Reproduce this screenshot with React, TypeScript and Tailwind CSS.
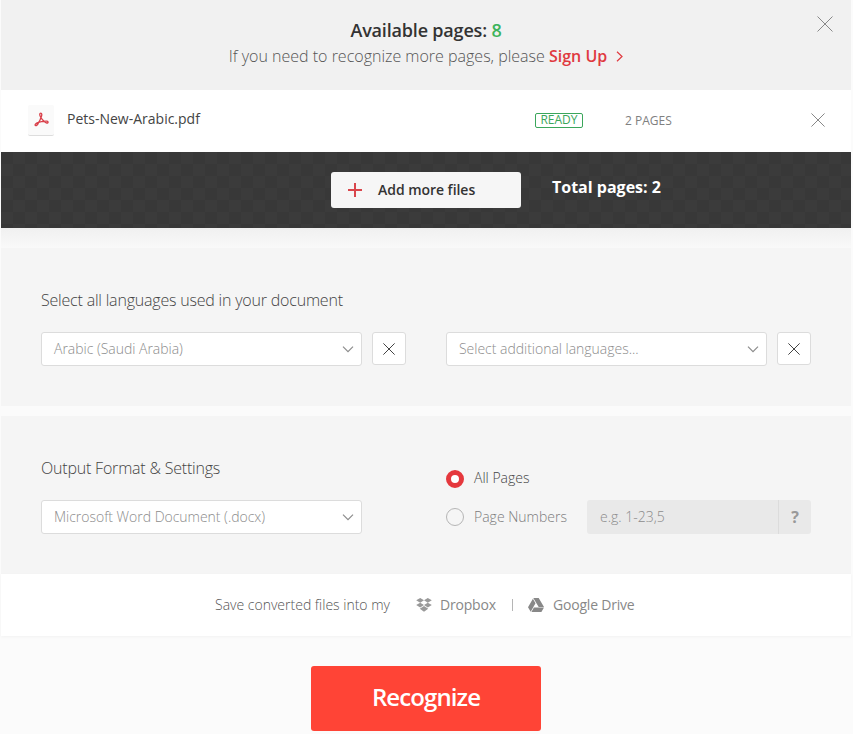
import { useState } from "react";

type IconProps = {
  className?: string;
};

type SelectProps = {
  label: string;
};

function CloseIcon({ className }: IconProps) {
  return (
    <svg viewBox="0 0 16 16" fill="none" stroke="currentColor" className={className}>
      <path d="M.5.5l15 15M15.5.5l-15 15" vectorEffect="non-scaling-stroke" />
    </svg>
  );
}

function PdfIcon({ className }: IconProps) {
  return (
    <svg viewBox="0 0 16 16" fill="none" stroke="currentColor" strokeWidth="1.4" className={className}>
      <path d="M7.400 5.800C5.500 3.200 6 1.200 7.200 1.200s1.700 2 .2 4.600zM7.400 5.800c-.4 1.900-1.200 3.700-2.500 5.400M7.400 5.800c.9 1.700 1.900 3 3.400 4.200M4.900 11.200c1.800-.7 3.800-1.100 5.900-1.200M4.900 11.200c-2.600.5-4 1.900-3.700 2.900.5 1.200 2.600.1 3.700-2.900zM10.800 10c2.400-.7 4.200-.2 4.200.9 0 1.300-2.300 1.200-4.200-.9z" />
    </svg>
  );
}

function DropboxIcon({ className }: IconProps) {
  return (
    <svg viewBox="0 0 16 14" fill="currentColor" className={className}>
      <path d="M4.200 0L8 2.300 4.200 4.700.2 2.300zM11.800 0l4 2.300-4 2.400L8 2.300zM4.200 4.700L8 7.100 4.200 9.500.2 7.100zM11.800 4.700l4 2.400-4 2.400L8 7.100zM8 8l4.200 2.700L8 13.800l-4.200-3.100z" />
    </svg>
  );
}

function DriveIcon({ className }: IconProps) {
  return (
    <svg viewBox="0 0 16 14" fill="currentColor" className={className}>
      <path d="M5.300 0h5.400L16 9h-5.300zM4.900.7l2.600 4.600L2.700 13.700 0 9.200zM5.900 9.600H16L13.400 14H3.400z" />
    </svg>
  );
}

function Select({ label }: SelectProps) {
  return (
    <button className="flex h-[34px] w-[321px] items-center justify-between rounded-[3px] border border-[#dcdcdc] bg-white pr-[7px] pl-3 text-sm font-light tracking-[-0.02px] text-[#8c8c8c]">
      <span>{label}</span>
      <svg viewBox="0 0 12 7" fill="none" stroke="currentColor" strokeWidth="1.2" className="h-[7px] w-3">
        <path d="M1 .7l5 5 5-5" />
      </svg>
    </button>
  );
}

function ClearButton() {
  return (
    <button
      aria-label="Clear"
      className="flex h-[33px] w-[34px] items-center justify-center rounded-[3px] border border-[#dcdcdc] bg-white text-[#444]">
      <CloseIcon className="size-3" />
    </button>
  );
}

export default function App() {
  const [pages, setPages] = useState("all");

  return (
    <div className="h-[734px] overflow-hidden bg-[#fbfbfb] pr-0.5 pl-px font-['Open_Sans','Noto_Sans',sans-serif] text-[#444]">
      {/* Available pages */}
      <header className="relative h-[90px] bg-[#f1f1f1] pt-[17px] text-center">
        <h1 className="text-lg leading-[26px] font-semibold tracking-[-0.18px] text-[#333]">
          Available pages: <span className="text-[#3db45c]">8</span>
        </h1>
        <p className="flex items-center justify-center text-base leading-[26px] font-light whitespace-pre text-[#555]">
          If you need to recognize more pages, please{" "}
          <a href="#" className="flex items-center font-semibold text-[#e0393f]">
            Sign Up
            <svg viewBox="0 0 7 11" fill="none" stroke="currentColor" strokeWidth="1.2" className="ml-[9px] h-[11px] w-[7px]">
              <path d="M1 .8l5 4.700-5 4.700" />
            </svg>
          </a>
        </p>
        <button aria-label="Close" className="absolute top-4 right-[18px] text-[#888]">
          <CloseIcon className="size-4" />
        </button>
      </header>

      {/* File row */}
      <div className="flex h-[62px] items-center bg-white pr-[26px] pb-0.5 pl-[27px]">
        <div className="flex h-[31px] w-[26px] items-center justify-center rounded-xs border-b border-[#ddd] bg-[#fafafa] text-[#d9404a]">
          <PdfIcon className="size-[15px]" />
        </div>
        <span className="ml-[13px] w-[468px] pb-0.5 text-sm">Pets-New-Arabic.pdf</span>
        <span className="flex h-[15px] w-12 items-center justify-center rounded-[2px] border border-[#3aa65b] text-xs text-[#3aa65b]">
          READY
        </span>
        <span className="ml-[42px] pt-px text-xs text-[#808080]">2 PAGES</span>
        <button aria-label="Remove file" className="ml-auto text-[#888]">
          <CloseIcon className="size-3.5" />
        </button>
      </div>

      {/* Toolbar */}
      <div className="h-[76px] bg-[repeating-conic-gradient(#3b3b3b_0_25%,#383838_0_50%)] bg-[length:24px_24px]">
        <div className="flex pt-5 pl-[330px]">
          <button className="flex h-9 w-[190px] items-center rounded-[3px] bg-[#f6f6f6] pl-[17px] text-sm font-semibold tracking-[-0.04px] text-[#333]">
            <svg viewBox="0 0 14 14" stroke="#d9464c" strokeWidth="2" className="mr-4 size-3.5">
              <path d="M7 0v14M0 7h14" />
            </svg>
            Add more files
          </button>
          <span className="ml-[31px] pt-[3px] text-base leading-6 font-bold text-white">Total pages: 2</span>
        </div>
      </div>

      {/* Languages */}
      <div className="h-5 bg-linear-to-b from-[#f0f0f0] to-[#f9f9f9]" />
      <section className="h-[158px] bg-[#f5f5f5] px-10 pt-10">
        <h2 className="text-base leading-6 font-light tracking-[-0.2px] text-[#444]">
          Select all languages used in your document
        </h2>
        <div className="mt-5 flex justify-between">
          <div className="flex gap-2.5">
            <Select label="Arabic (Saudi Arabia)" />
            <ClearButton />
          </div>
          <div className="flex gap-2.5">
            <Select label="Select additional languages..." />
            <ClearButton />
          </div>
        </div>
      </section>

      {/* Output */}
      <section className="mt-2.5 flex h-[158px] gap-[84px] bg-[#f5f5f5] px-10 pt-10">
        <div>
          <h2 className="mb-5 text-base leading-6 font-light tracking-[-0.2px] text-[#444]">Output Format &amp; Settings</h2>
          <Select label="Microsoft Word Document (.docx)" />
        </div>
        <div className="flex-1 pt-3.5 text-sm font-light">
          <button onClick={() => setPages("all")} className="flex h-[18px] items-center">
            <span
              className={
                pages === "all"
                  ? "size-[18px] rounded-full border-[5px] border-[#e5383d] bg-white"
                  : "size-[18px] rounded-full border border-[#b5b5b5]"
              }
            />
            <span className="ml-2.5 pb-0.5">All Pages</span>
          </button>
          <div className="mt-3 flex h-[34px] items-center text-[#7c7c7c]">
            <button onClick={() => setPages("range")} className="flex items-center">
              <span
                className={
                  pages === "range"
                    ? "size-[18px] rounded-full border-[5px] border-[#e5383d] bg-white"
                    : "size-[18px] rounded-full border border-[#b5b5b5]"
                }
              />
              <span className="ml-2.5">Page Numbers</span>
            </button>
            <div className="ml-auto flex h-[34px] w-56 rounded-[3px] bg-[#e9e9e9] leading-[34px] text-[#8c8c8c]">
              <span className="w-48 border-r border-[#dcdcdc] pl-[13px]">e.g. 1-23,5</span>
              <span className="flex-1 text-center text-base leading-[34px] font-bold text-[#999]">?</span>
            </div>
          </div>
        </div>
      </section>

      {/* Cloud storage */}
      <div className="flex h-[62px] items-center bg-white pl-[214px] text-sm font-light text-[#555] shadow-[0_1px_3px_rgba(0,0,0,0.04)]">
        <span>Save converted files into my</span>
        <a href="#" className="ml-[26px] flex w-[80px] items-center font-normal tracking-[-0.2px] text-[#888]">
          <DropboxIcon className="mr-2 h-3.5 w-4 text-[#999]" />
          Dropbox
        </a>
        <span className="mx-4 h-3 w-px bg-[#b5b5b5]" />
        <a href="#" className="-ml-px flex items-center font-normal tracking-[-0.2px] text-[#888]">
          <DriveIcon className="mr-[9px] h-3.5 w-4 text-[#888]" />
          Google Drive
        </a>
      </div>

      <button className="mt-[30px] ml-[310px] flex h-[65px] w-[230px] items-center justify-center rounded-[3px] bg-[#ff4436] pb-1 text-2xl font-semibold tracking-[-0.9px] text-white">
        Recognize
      </button>
    </div>
  );
}
